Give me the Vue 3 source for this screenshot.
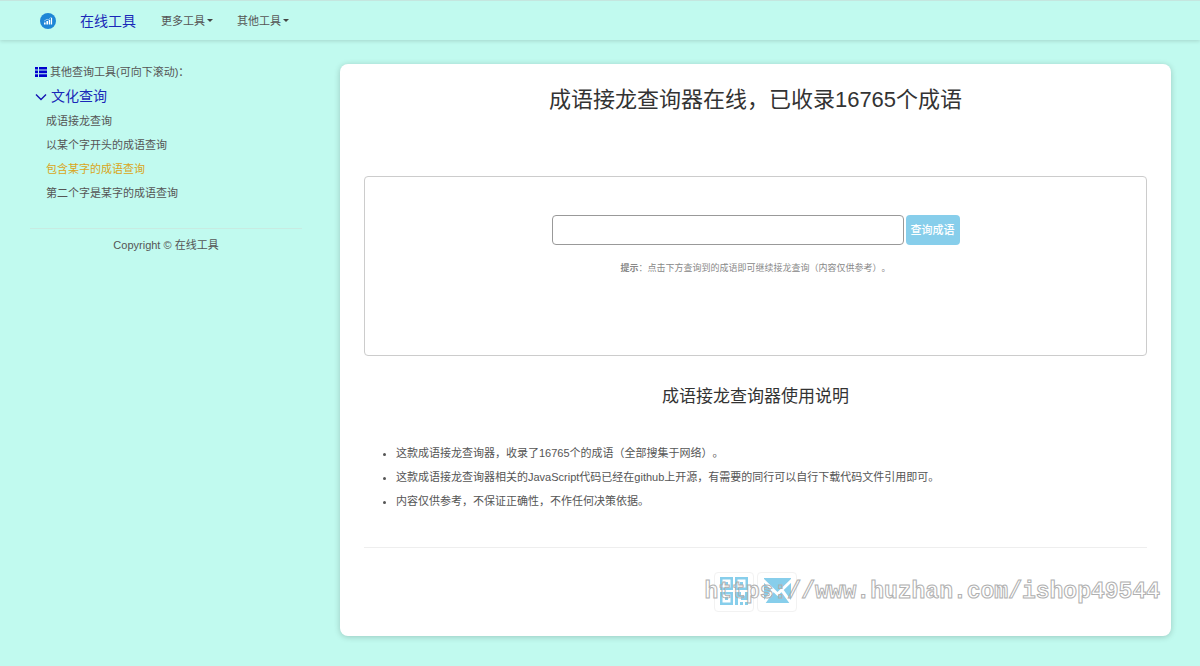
<template>
  <header class="navbar">
    <a href="#" class="logo" aria-label="首页">
      <svg viewBox="0 0 16 16" width="16" height="16">
        <circle cx="8" cy="8" r="8" fill="#1e86d6" />
        <path d="M4 11.5V9.5h1.6v2zM6.4 11.5V8H8v3.5zM8.8 11.5V6.8h1.5v4.7zM11 11.5V4.8h1.1v6.7z" fill="#fff" />
        <path d="M4 8.2l3-2 1.400.6L11 4.200" fill="none" stroke="#d6ecfb" stroke-width=".6" />
      </svg>
    </a>
    <a href="#" class="brand">在线工具</a>
    <nav class="menus">
      <button v-for="menu in menus" :key="menu" type="button" class="menu">
        {{ menu }}<span class="caret"></span>
      </button>
    </nav>
  </header>

  <div class="layout">
    <aside class="sidebar">
      <p class="side-title">
        <svg viewBox="0 0 12 12" width="12" height="12" fill="#0000cd">
          <path d="M0 1h3v2.600H0zM4 1h8v2.600H4zM0 4.600h3v2.600H0zM4 4.600h8v2.600H4zM0 8.200h3v2.800H0zM4 8.200h8v2.800H4z" />
        </svg>
        其他查询工具(可向下滚动)：
      </p>
      <button type="button" class="group" :aria-expanded="open" @click="open = !open">
        <svg viewBox="0 0 12 12" width="12" height="12">
          <path d="M1 3.500l5 5 5-5" fill="none" stroke="#1414b4" stroke-width="1.400" />
        </svg>
        文化查询
      </button>
      <ul v-show="open" class="links">
        <li v-for="link in links" :key="link">
          <a href="#" :class="{ active: link === current }" @click.prevent="current = link">{{ link }}</a>
        </li>
      </ul>
      <p class="copyright">Copyright © 在线工具</p>
    </aside>

    <main class="card">
      <h1>成语接龙查询器在线，已收录16765个成语</h1>

      <section class="search-box">
        <form class="search" @submit.prevent>
          <input v-model="word" type="text" aria-label="成语" />
          <button type="submit">查询成语</button>
        </form>
        <p class="hint"><b>提示</b>：点击下方查询到的成语即可继续接龙查询（内容仅供参考）。</p>
      </section>

      <h2>成语接龙查询器使用说明</h2>
      <ul class="notes">
        <li v-for="note in notes" :key="note">{{ note }}</li>
      </ul>

      <footer class="share">
        <button type="button" class="share-btn" aria-label="二维码">
          <svg viewBox="0 0 30 30" width="30" height="30" fill="#87ceeb">
            <path fill-rule="evenodd" d="M1 0h13v13H1zM3.500 2.500v8h8v-8zM16 0h13v13H16zM18.500 2.500v8h8v-8zM1 15h13v13H1zM3.500 17.500v8h8v-8z" />
            <path d="M6 5h3v3H6zM21 5h3v3h-3zM6 20h3v3H6zM16 15h6v4h4v-4h3v8h-7v-3h-3v8h-3zM21 25h3v3h-3zM26 25h3v3h-3z" />
          </svg>
        </button>
        <button type="button" class="share-btn" aria-label="邮件">
          <svg viewBox="0 0 30 30" width="30" height="30">
            <path d="M2 1h27v25H2z" fill="#87ceeb" />
            <path d="M1 3l14.500 14L30 3M1 27l9.500-13M30 27l-9.500-13" fill="none" stroke="#fff" stroke-width="3" />
          </svg>
        </button>
        <span class="watermark">https://www.huzhan.com/ishop49544</span>
      </footer>
    </main>
  </div>
</template>

<script setup>
import { ref } from 'vue'

const menus = ['更多工具', '其他工具']
const links = [
  '成语接龙查询',
  '以某个字开头的成语查询',
  '包含某字的成语查询',
  '第二个字是某字的成语查询'
]
const notes = [
  '这款成语接龙查询器，收录了16765个的成语（全部搜集于网络）。',
  '这款成语接龙查询器相关的JavaScript代码已经在github上开源，有需要的同行可以自行下载代码文件引用即可。',
  '内容仅供参考，不保证正确性，不作任何决策依据。'
]

const open = ref(true)
const current = ref('包含某字的成语查询')
const word = ref('')
</script>

<style>
body {
  background: #c1faef;
  font-family: "Liberation Sans", "Noto Sans CJK SC", sans-serif;
  font-size: 11px;
  line-height: 24px;
  color: #555;
  text-spacing-trim: space-all;
}

button,
input {
  font: inherit;
  color: inherit;
}
</style>

<style scoped>
h1,
h2,
p,
ul {
  margin: 0;
  padding: 0;
  font-weight: 400;
}

a {
  color: inherit;
  text-decoration: none;
}

svg {
  display: block;
}

.navbar {
  display: flex;
  align-items: center;
  height: 39px;
  padding-left: 40px;
  border-top: 1px solid #c5e6df;
  box-shadow: 0 1px 4px rgba(0, 0, 0, 0.15);
}

.brand {
  margin-left: 24px;
  font-size: 14px;
  color: #1a28b8;
}

.menus {
  display: flex;
  gap: 24px;
  margin-left: 25px;
}

.menu {
  display: flex;
  align-items: center;
  gap: 2px;
  padding: 0;
  border: none;
  background: none;
  cursor: pointer;
}

.caret {
  border: 3px solid transparent;
  border-top-color: #444;
  border-bottom: none;
}

.layout {
  display: grid;
  grid-template-columns: 272px 1fr;
  align-items: start;
  gap: 38px;
  padding: 24px 29px 30px 30px;
}

.sidebar {
  margin-top: -4px;
}

.side-title,
.group {
  display: flex;
  align-items: center;
  gap: 3px;
  padding-left: 5px;
}

.group {
  gap: 4px;
  padding-top: 0;
  padding-bottom: 0;
  border: none;
  background: none;
  font-size: 14px;
  line-height: 25px;
  color: #1a28b8;
  cursor: pointer;
}

.links {
  padding-left: 16px;
  list-style: none;
}

.active {
  color: #daa520;
}

.copyright {
  margin-top: 23px;
  padding-top: 4px;
  border-top: 1px solid #c8ebe2;
  text-align: center;
}

.card {
  padding: 24px;
  border-radius: 8px;
  background: #fff;
  box-shadow: 0 1px 6px rgba(0, 0, 0, 0.2);
}

h1 {
  margin-bottom: 64px;
  font-size: 22px;
  line-height: 24px;
  text-align: center;
  color: #333;
}

.search-box {
  box-sizing: border-box;
  min-height: 180px;
  padding: 38px 24px;
  border: 1px solid #ccc;
  border-radius: 4px;
}

.search {
  display: flex;
  justify-content: center;
  gap: 2px;
}

.search input {
  box-sizing: border-box;
  width: 352px;
  height: 30px;
  padding: 0 8px;
  border: 1px solid #999;
  border-radius: 4px;
  background: #fff;
}

.search button {
  width: 54px;
  padding: 0;
  border: none;
  border-radius: 4px;
  background: #87ceeb;
  color: #fff;
  font-weight: 500;
  cursor: pointer;
}

.hint {
  margin-top: 15px;
  font-size: 9px;
  line-height: 16px;
  text-align: center;
  color: #888;
}

h2 {
  margin: 29px 0 32px;
  font-size: 17px;
  line-height: 24px;
  text-align: center;
  color: #333;
}

.notes {
  padding-left: 32px;
}

.share {
  position: relative;
  display: flex;
  justify-content: center;
  gap: 3px;
  margin-top: 34px;
  padding-top: 24px;
  border-top: 1px solid #eee;
}

.share-btn {
  width: 40px;
  height: 40px;
  padding: 4px;
  border: 1px solid #f2f2f2;
  border-radius: 4px;
  background: #fff;
  cursor: pointer;
}

/* outlined site address laid over the share row */
.watermark {
  position: absolute;
  right: -13px;
  bottom: 8px;
  font-family: "Liberation Mono", monospace;
  font-size: 23px;
  font-weight: 700;
  line-height: 24px;
  color: transparent;
  -webkit-text-stroke: 1px #b0b0b0;
  pointer-events: none;
}
</style>
